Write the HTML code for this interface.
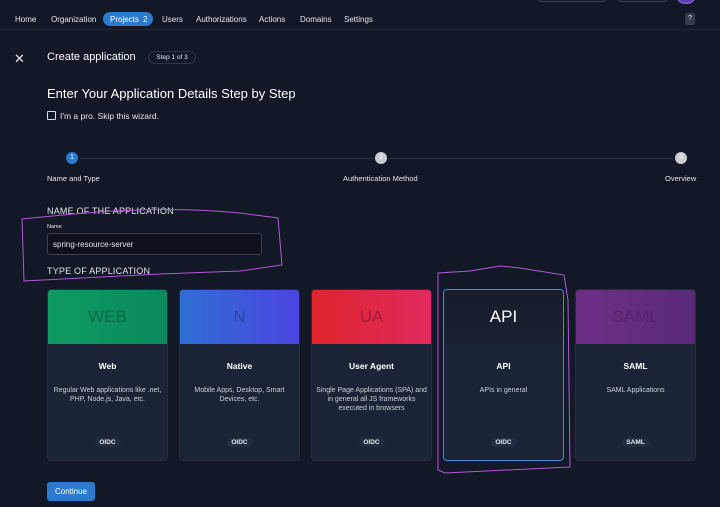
<!DOCTYPE html>
<html><head><style>
*{margin:0;padding:0;box-sizing:border-box}
body{width:720px;height:507px;background:#121826;font-family:"Liberation Sans",sans-serif;color:#e5e7eb;position:relative;overflow:hidden}
.abs{position:absolute}
.nav{top:12px;left:0;width:720px;height:17px;font-size:8px;color:#e5e7eb}
.nav span{position:absolute;top:3px}
.line{top:29px;left:0;width:720px;height:1px;background:#1f2737}
.card{position:absolute;top:289px;width:121px;height:172px;background:#1b2437;border-radius:4px;overflow:hidden;border:1px solid #232c40}
.card .h{height:54px;display:flex;align-items:center;justify-content:center;font-size:17px}
.card .t{text-align:center;font-size:8.5px;font-weight:bold;color:#fff;margin-top:17px}
.card .d{text-align:center;font-size:7px;color:#cbd0da;margin-top:15px;line-height:9px;padding:0 4px}
.card .b{position:absolute;bottom:13px;left:50%;transform:translateX(-50%);font-size:6.5px;font-weight:bold;background:#222c42;border-radius:5px;padding:1px 5px;color:#e5e7eb}
</style></head><body>
<div class="abs nav">
<span style="left:15px">Home</span>
<span style="left:51px">Organization</span>
<div class="abs" style="left:103px;top:0;width:50px;height:14px;background:#2a7bd0;border-radius:7px"></div>
<span style="left:110px;color:#fff">Projects</span><span style="left:143px;color:#fff">2</span>
<span style="left:162px">Users</span>
<span style="left:196px">Authorizations</span>
<span style="left:259px">Actions</span>
<span style="left:300px">Domains</span>
<span style="left:344px">Settings</span>
<div class="abs" style="left:685px;top:1px;width:10px;height:12px;background:#333b4c;border-radius:2px;font-size:7px;text-align:center;line-height:12px">?</div>
</div>
<div class="abs" style="left:538px;top:-6px;width:68px;height:8px;border:1px solid #394152;border-radius:4px"></div>
<div class="abs" style="left:618px;top:-6px;width:50px;height:8px;border:1px solid #394152;border-radius:4px"></div>
<div class="abs" style="left:677px;top:-8px;width:18px;height:12px;border-radius:50%;background:#5b3fb0;border:1px solid #8d6ae0"></div>
<div class="abs line"></div>
<div class="abs" style="left:14px;top:51px;font-size:13px;color:#e5e7eb">✕</div>
<div class="abs" style="left:47px;top:51px;font-size:11px;color:#fff">Create application</div>
<div class="abs" style="left:148px;top:51px;width:48px;height:13px;border:1px solid #2c3446;border-radius:7px;font-size:6.5px;text-align:center;line-height:11px">Step 1 of 3</div>
<div class="abs" style="left:47px;top:86px;font-size:13px;color:#fff">Enter Your Application Details Step by Step</div>
<div class="abs" style="left:47px;top:111px;width:9px;height:9px;border:1px solid #ddd;border-radius:1px"></div>
<div class="abs" style="left:60px;top:111px;font-size:8.5px">I'm a pro. Skip this wizard.</div>
<div class="abs" style="left:80px;top:158px;width:293px;height:1px;background:#2b3446"></div>
<div class="abs" style="left:389px;top:158px;width:284px;height:1px;background:#2b3446"></div>
<div class="abs" style="left:66px;top:152px;width:12px;height:12px;border-radius:50%;background:#2a7bd0;font-size:7px;text-align:center;line-height:12px;color:#fff">1</div>
<div class="abs" style="left:375px;top:152px;width:12px;height:12px;border-radius:50%;background:#c9ccd2;font-size:7px;text-align:center;line-height:12px;color:#fff">2</div>
<div class="abs" style="left:675px;top:152px;width:12px;height:12px;border-radius:50%;background:#c9ccd2;font-size:7px;text-align:center;line-height:12px;color:#fff">3</div>
<div class="abs" style="left:47px;top:174px;font-size:7.5px">Name and Type</div>
<div class="abs" style="left:343px;top:174px;font-size:7.5px">Authentication Method</div>
<div class="abs" style="left:665px;top:174px;font-size:7.5px">Overview</div>
<div class="abs" style="left:47px;top:206px;font-size:9px;letter-spacing:.2px">NAME OF THE APPLICATION</div>
<div class="abs" style="left:47px;top:224px;font-size:5.5px">Name</div>
<div class="abs" style="left:47px;top:233px;width:215px;height:22px;background:#0c111c;border:1px solid #3a4254;border-radius:3px;font-size:8px;padding:6px 5px;color:#e5e7eb">spring-resource-server</div>
<div class="abs" style="left:47px;top:266px;font-size:9px;letter-spacing:.2px">TYPE OF APPLICATION</div>
<div class="card" style="left:47px"><div class="h" style="background:linear-gradient(90deg,#0e9a61,#0b8a5c);color:#0a6a44">WEB</div><div class="t">Web</div><div class="d">Regular Web applications like .net, PHP, Node.js, Java, etc.</div><div class="b">OIDC</div></div>
<div class="card" style="left:179px"><div class="h" style="background:linear-gradient(90deg,#2f6fd4,#4c45e0);color:#2a48a8">N</div><div class="t">Native</div><div class="d">Mobile Apps, Desktop, Smart Devices, etc.</div><div class="b">OIDC</div></div>
<div class="card" style="left:311px"><div class="h" style="background:linear-gradient(90deg,#e0242c,#e02a5e);color:#a81c36">UA</div><div class="t">User Agent</div><div class="d">Single Page Applications (SPA) and in general all JS frameworks executed in browsers</div><div class="b">OIDC</div></div>
<div class="card" style="left:443px;border:1px solid #3a8fe0"><div class="h" style="background:linear-gradient(180deg,#151c2a,#1a2232);color:#fff">API</div><div class="t">API</div><div class="d">APIs in general</div><div class="b">OIDC</div></div>
<div class="card" style="left:575px"><div class="h" style="background:linear-gradient(90deg,#6e2f86,#5a2a78);color:#552468">SAML</div><div class="t">SAML</div><div class="d">SAML Applications</div><div class="b">SAML</div></div>
<div class="abs" style="left:47px;top:482px;width:48px;height:19px;background:#2a7bd0;border-radius:3px;font-size:8px;color:#fff;text-align:center;line-height:19px">Continue</div>
<svg class="abs" style="left:0;top:0" width="720" height="507" fill="none" stroke="#b455d8" stroke-width="1">
<path d="M22,219 C90,212 160,205 240,213 L278,218 L282,265 L240,271 L160,274 L24,281 Z"/>
<path d="M438,273 L438,470 L445,473 L570,467 L568,300 L564,275 L520,268 L500,266 L470,271 Z"/>
</svg>
</body></html>
